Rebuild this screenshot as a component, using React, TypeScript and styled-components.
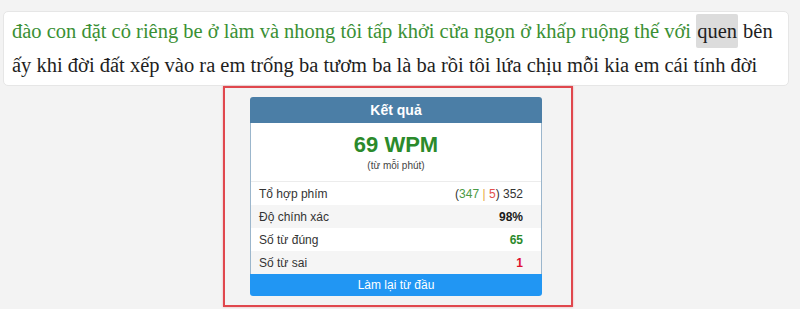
import React from 'react';
import styled, { createGlobalStyle } from 'styled-components';

const GlobalStyle = createGlobalStyle`
  html, body {
    margin: 0;
    padding: 0;
    background: #f3f3f3;
  }
`

const Page = styled.main`
  width: 800px;
  height: 309px;
  padding: 11px 11px 0 3px;
  box-sizing: border-box;
  display: flex;
  flex-flow: column nowrap;
`

const TextBox = styled.div`
  height: 75px;
  box-sizing: border-box;
  padding: 2px 8px 0 8px;
  background: #ffffff;
  border: 1px solid #e6e6e6;
  border-radius: 5px;
  font-family: "Liberation Serif", "Times New Roman", serif;
  font-size: 20.5px;
  line-height: 34px;
  color: #1e1e1e;
  white-space: nowrap;
  overflow: hidden;
`

const Typed = styled.span`
  color: #3a9034;
`

const Current = styled.span`
  display: inline-block;
  padding: 0 1px;
  background: #dcdcdc;
  border-radius: 2px;
`

const ResultArea = styled.div`
  display: flex;
  justify-content: center;
  padding-left: 4px;
`

const Highlight = styled.section`
  width: 350px;
  height: 221px;
  box-sizing: border-box;
  border: 2px solid #e0474d;
  box-shadow: 0 0 2px rgba(224, 71, 77, 0.4);
  padding: 9px 29px 0 25px;
`

const Card = styled.div`
  width: 292px;
  border-radius: 3px;
  overflow: hidden;
  background: #ffffff;
  font-family: "Liberation Sans", Arial, sans-serif;
  display: flex;
  flex-flow: column nowrap;
`

const CardHeader = styled.div`
  height: 26px;
  background: #4b7ea6;
  color: #ffffff;
  font-size: 14px;
  font-weight: bold;
  display: flex;
  align-items: center;
  justify-content: center;
`

const CardBody = styled.div`
  border-left: 1px solid #9bb6cc;
  border-right: 1px solid #9bb6cc;
`

const Score = styled.div`
  height: 59px;
  display: flex;
  flex-flow: column nowrap;
  align-items: center;
  border-bottom: 1px solid #ececec;
  box-sizing: border-box;
`

const Wpm = styled.div`
  margin-top: 9px;
  font-size: 22px;
  line-height: 26px;
  font-weight: bold;
  color: #2b8a2b;
`

const Unit = styled.div`
  margin-top: 2px;
  font-size: 10px;
  line-height: 12px;
  color: #444;
`

const Row = styled.div<{ $striped?: boolean }>`
  height: 23px;
  box-sizing: border-box;
  padding: 0 18px 0 8px;
  display: flex;
  align-items: center;
  justify-content: space-between;
  font-size: 12px;
  color: #333;
  background: ${p => (p.$striped ? '#f5f5f5' : '#ffffff')};
`

const Value = styled.span<{ $color?: string; $bold?: boolean }>`
  color: ${p => p.$color || '#333'};
  font-weight: ${p => (p.$bold ? 'bold' : 'normal')};
`

const Part = styled.span<{ $color: string }>`
  color: ${p => p.$color};
`

const RestartButton = styled.button`
  height: 22px;
  border: none;
  margin: 0;
  padding: 0;
  background: #2196f3;
  color: #ffffff;
  font-family: "Liberation Sans", Arial, sans-serif;
  font-size: 12px;
  cursor: pointer;
`

const rows = [
  { label: 'Độ chính xác', value: '98%', color: '#1a1a1a' },
  { label: 'Số từ đúng', value: '65', color: '#2b8a2b' },
  { label: 'Số từ sai', value: '1', color: '#e0102e' },
]

function App() {
  return (
    <>
      <GlobalStyle />
      <Page>
        <TextBox>
          <Typed>đào con đặt cỏ riêng be ở làm và nhong tôi tấp khởi cửa ngọn ở khấp ruộng thế với</Typed>{' '}
          <Current>quen</Current> bên
          <br />
          ấy khi đời đất xếp vào ra em trống ba tươm ba là ba rồi tôi lứa chịu mỗi kia em cái tính đời
        </TextBox>
        <ResultArea>
          <Highlight>
            <Card>
              <CardHeader>Kết quả</CardHeader>
              <CardBody>
                <Score>
                  <Wpm>69 WPM</Wpm>
                  <Unit>(từ mỗi phút)</Unit>
                </Score>
                <Row>
                  <span>Tổ hợp phím</span>
                  <Value>
                    (<Part $color="#4a9a44">347</Part> <Part $color="#e8a640">|</Part>{' '}
                    <Part $color="#e2504c">5</Part>) 352
                  </Value>
                </Row>
                {rows.map((r, i) => (
                  <Row key={r.label} $striped={i % 2 === 0}>
                    <span>{r.label}</span>
                    <Value $color={r.color} $bold>{r.value}</Value>
                  </Row>
                ))}
              </CardBody>
              <RestartButton>Làm lại từ đầu</RestartButton>
            </Card>
          </Highlight>
        </ResultArea>
      </Page>
    </>
  );
}

export default App;
